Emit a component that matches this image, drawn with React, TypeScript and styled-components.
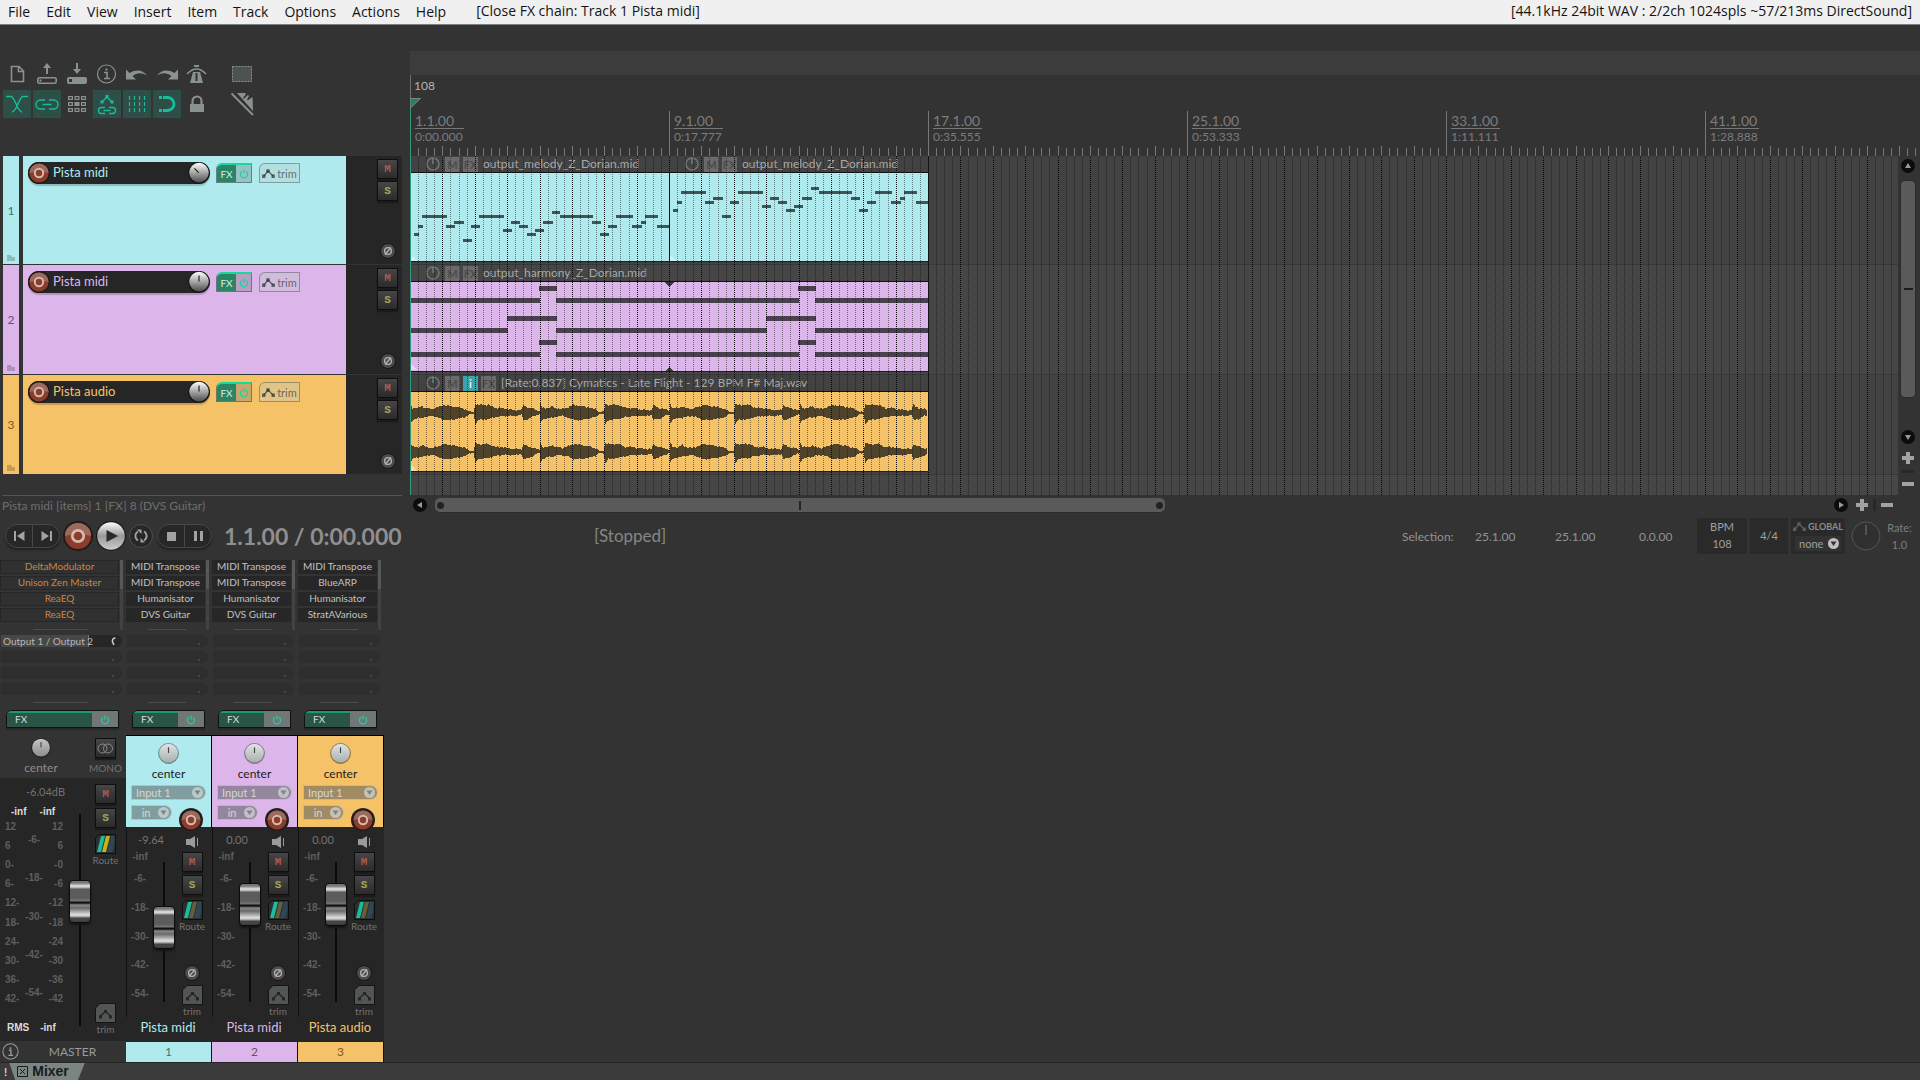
import React from "react";
import styled, { createGlobalStyle, css } from "styled-components";

const UI = `Lato, "Open Sans", "Noto Sans", sans-serif`;
const MENU = `"Open Sans", "Noto Sans", sans-serif`;
const METER = `"Liberation Sans", Arial, sans-serif`;

const BAR = 32.375;
const SECTION = 259;

const GlobalStyle = createGlobalStyle`
  *, *::before, *::after { box-sizing: border-box; }
  body { margin: 0; background: #333; font-family: ${UI}; font-size: 12px; color: #8e8e8e; }
  button, select, input { font: inherit; color: inherit; margin: 0; padding: 0; border: 0; background: none; }
  button { cursor: pointer; }
  svg { display: block; }
`;

/* ---------- data ---------- */

type Track = {
  id: number;
  name: string;
  color: string;
  ink: string;
  height: number;
  knob: number;
  volume: string;
  fader: number;
  fx: string[];
};

const TRACKS: Track[] = [
  { id: 1, name: "Pista midi", color: "#afebee", ink: "#3f7477", height: 108, knob: -45, volume: "-9.64", fader: 55, fx: ["MIDI Transpose", "MIDI Transpose", "Humanisator", "DVS Guitar"] },
  { id: 2, name: "Pista midi", color: "#dcb6ea", ink: "#6d4a7a", height: 109, knob: 0, volume: "0.00", fader: 78, fx: ["MIDI Transpose", "MIDI Transpose", "Humanisator", "DVS Guitar"] },
  { id: 3, name: "Pista audio", color: "#f5c267", ink: "#7d5a1c", height: 99, knob: 0, volume: "0.00", fader: 78, fx: ["MIDI Transpose", "BlueARP", "Humanisator", "StratAVarious"] },
];

const MASTER_FX = ["DeltaModulator", "Unison Zen Master", "ReaEQ", "ReaEQ"];

const MARKS = [
  ["1.1.00", "0:00.000"],
  ["9.1.00", "0:17.777"],
  ["17.1.00", "0:35.555"],
  ["25.1.00", "0:53.333"],
  ["33.1.00", "1:11.111"],
  ["41.1.00", "1:28.888"],
];

/* start, end, row */
const MELODY: [number, number, number][] = [
  [4, 9, 60], [8, 13, 52], [12, 37, 42], [36, 45, 52], [44, 54, 48], [53, 62, 66], [61, 70, 52], [69, 94, 42],
  [93, 102, 56], [101, 110, 48], [109, 118, 52], [117, 126, 60], [125, 134, 56], [133, 143, 48], [142, 150, 38],
  [150, 183, 42], [182, 191, 48], [190, 199, 60], [198, 207, 52], [206, 223, 42], [222, 232, 52], [231, 236, 48],
  [235, 248, 42], [247, 259, 52],
];

const HARMONY: [number, number, number][] = [
  [129, 147, 4], [388, 406, 4],
  [0, 130, 16], [146, 389, 16], [405, 518, 16],
  [97, 147, 34], [356, 406, 34],
  [0, 98, 46], [146, 357, 46], [405, 518, 46],
  [129, 147, 58], [388, 406, 58],
  [0, 130, 70], [146, 389, 70], [405, 518, 70],
];

/* position, level above the axis, level below the axis */
const ENVELOPE: [number, number, number][] = [
  [0, 9, 10], [2, 5, 7], [8, 5, 5], [12, 7, 5], [14, 5, 4], [22, 4, 3], [28, 6, 5], [33, 8, 7], [40, 7, 7], [46, 6, 6],
  [55, 4, 4], [59, 1, 1], [63, 1, 1], [65, 9, 11], [68, 8, 7], [78, 8, 6], [85, 5, 4], [93, 5, 3], [96, 4, 3],
  [105, 3, 3], [111, 3, 2], [113, 8, 7], [118, 5, 6], [124, 4, 3], [129, 2, 1],
];

function level(x: number, side: 1 | 2) {
  for (let i = 1; i < ENVELOPE.length; i++) {
    const a = ENVELOPE[i - 1];
    const b = ENVELOPE[i];
    if (x <= b[0]) return a[side] + ((b[side] - a[side]) * (x - a[0])) / (b[0] - a[0]);
  }
  return 1;
}

function wavePath(axis: number, seed: number) {
  const top: string[] = [];
  const bottom: string[] = [];
  for (let x = 0; x < 517; x++) {
    const local = x % 130;
    const jitter = Math.sin(x * 1.7 + seed) * 0.4 + Math.sin(x * 0.61 + seed * 3) * 0.4;
    const up = Math.max(1, Math.round(level(local, 1) + jitter));
    const down = Math.max(1, Math.round(level(local, 2) - jitter * 0.8));
    top.push(`L${x} ${axis - up}H${x + 1}`);
    bottom.unshift(`L${x + 1} ${axis + down}H${x}`);
  }
  return `M0 ${axis}${top.join("")}${bottom.join("")}Z`;
}

/* ---------- shared parts ---------- */

const Page = styled.div`
  min-height: 100vh;
  display: flex;
  flex-direction: column;
  background: #333;
`;

const MenuBar = styled.header`
  display: flex;
  height: 25px;
  flex: none;
  background: #f0f0f0;
  border-bottom: 1px solid #7c8080;
  color: #141414;
  font: 14px/22px ${MENU};
  padding: 0 8px;
  white-space: nowrap;
`;

const MenuList = styled.nav`
  display: flex;
  gap: 16px;
`;

const MenuItem = styled.button`
  line-height: 22px;
`;

const MenuInfo = styled.span<{ $end?: boolean }>`
  ${(p) => (p.$end ? "margin-left: auto;" : "margin-left: 30px;")}
`;

const Workspace = styled.div`
  display: flex;
`;

const LeftColumn = styled.section`
  flex: none;
  width: 403px;
  margin-right: 7px;
  display: flex;
  flex-direction: column;
  padding-top: 35px;
`;

const Toolbar = styled.div`
  display: flex;
  flex-direction: column;
  gap: 2px;
  padding-left: 3px;
  margin-bottom: 38px;
`;

const ToolRow = styled.div`
  display: flex;
  gap: 2px;
`;

const Tool = styled.button<{ $on?: boolean; $apart?: boolean }>`
  width: 28px;
  height: 28px;
  color: ${(p) => (p.$on ? "#1abc98" : "#8a9290")};
  background: ${(p) => (p.$on ? "#2d4f48" : "transparent")};
  ${(p) => p.$apart && "margin-left: 15px;"}
`;

const SquareButton = styled.button<{ $ink: string }>`
  width: 21px;
  height: 20px;
  border: 1px solid #0f0f0f;
  background: linear-gradient(#464646, #2b2b2b);
  box-shadow: 0 2px 1px #1b1b1b;
  color: ${(p) => p.$ink};
  font: 11px/16px "Liberation Mono", monospace;
  font-weight: 700;
  display: grid;
  place-items: center;
`;

const RoundButton = styled.button<{ $size: number }>`
  width: ${(p) => p.$size}px;
  height: ${(p) => p.$size}px;
  flex: none;
  border-radius: 50%;
`;

const Spacer = styled.div<{ $size?: number }>`
  flex: ${(p) => (p.$size ? `0 0 ${p.$size}px` : "1")};
`;

const RecordArm = ({ size = 22 }: { size?: number }) => (
  <RoundButton $size={size} aria-label="Record arm">
    <svg width={size} height={size} viewBox="0 0 22 22">
      <circle cx="11" cy="11" r="11" fill="#241a18" />
      <circle cx="11" cy="11" r="9.6" fill="#8a3d2c" />
      <path d="M1.4 11a9.6 9.6 0 0 1 19.2 0q-9.6-3-19.2 0z" fill="#9b6a5e" />
      <circle cx="11" cy="11" r="4.2" fill="#8a3d2c" stroke="#d9b8ae" strokeWidth="2" />
    </svg>
  </RoundButton>
);

type KnobProps = { size: number; angle?: number; from?: string; to: string; ink?: string };

const Knob = ({ size, angle = 0, from = "ffffff", to, ink = "#222" }: KnobProps) => (
  <RoundButton $size={size} aria-label="Pan">
    <svg width={size} height={size} viewBox="0 0 22 22">
      <defs>
        <linearGradient id={`k${from}${to}`} x1="0" y1="0" x2="0" y2="1">
          <stop offset="0" stopColor={`#${from}`} />
          <stop offset="1" stopColor={`#${to}`} />
        </linearGradient>
      </defs>
      <circle cx="11" cy="11" r="10.9" fill="#000" opacity=".4" />
      <circle cx="11" cy="10.6" r="9.8" fill={`url(#k${from}${to})`} />
      <path d="M11 4.500v6" stroke={ink} strokeWidth="1.2" transform={`rotate(${angle} 11 11)`} />
    </svg>
  </RoundButton>
);

const Phase = () => (
  <RoundButton $size={16} aria-label="Phase">
    <svg width="16" height="16" viewBox="0 0 16 16">
      <circle cx="8" cy="8" r="7.5" fill="#4b4b4b" stroke="#161616" />
      <circle cx="8" cy="8" r="3.4" fill="none" stroke="#b4b4b4" strokeWidth="1.3" />
      <path d="M5 11.5l6-7" stroke="#b4b4b4" strokeWidth="1.2" />
    </svg>
  </RoundButton>
);

const PowerIcon = () => (
  <svg width="10" height="10" viewBox="0 0 10 10" fill="none" stroke="#1fd0a0" strokeWidth="1.2">
    <path d="M3 2.2a3.6 3.6 0 1 0 4 0M5 .6v4" />
  </svg>
);

const EnvelopeIcon = ({ ink }: { ink: string }) => (
  <svg width="13" height="9" viewBox="0 0 13 9">
    <path d="M2 7l4-5 5 5" fill="none" stroke={ink} strokeWidth="1.3" />
    <path d="M0 5.5h3.4v3.4H0zM4.3.3h3.4v3.4H4.3zM9.5 5.5h3.4v3.4H9.5z" fill={ink} />
  </svg>
);

/* ---------- track panel ---------- */

const TrackList = styled.div`
  display: flex;
  flex-direction: column;
  gap: 1px;
  padding-left: 3px;
  width: 402px;
`;

const TrackRow = styled.article<{ $h: number }>`
  display: flex;
  height: ${(p) => p.$h}px;
`;

const TrackNumber = styled.div<{ $bg: string; $ink: string }>`
  width: 16px;
  margin-right: 4px;
  display: grid;
  grid-template-rows: 1fr auto 1fr;
  justify-items: center;
  background: ${(p) => p.$bg};
  color: ${(p) => p.$ink};
  font-size: 12px;
  svg { align-self: end; margin-bottom: 3px; }
`;

const TrackBody = styled.div<{ $bg: string }>`
  flex: 1;
  display: flex;
  align-items: flex-start;
  padding: 6px 5px;
  background: ${(p) => p.$bg};
`;

const NamePill = styled.div<{ $ink: string }>`
  display: flex;
  align-items: center;
  width: 182px;
  height: 22px;
  margin-right: 6px;
  border-radius: 11px;
  background: #262626;
  box-shadow: 0 2px 1px rgba(0, 0, 0, 0.2);
  color: ${(p) => p.$ink};
  font-size: 13px;
  line-height: 20px;
  span { flex: 1; padding: 0 0 2px 3px; }
`;

const MiniFx = styled.button`
  display: flex;
  align-items: stretch;
  width: 36px;
  height: 20px;
  margin: 1px 7px 0 0;
  border: 1px solid rgba(30, 60, 60, 0.45);
  border-top: 2px solid #17d99a;
  border-top-left-radius: 6px;
  background: rgba(110, 120, 120, 0.35);
  color: #d6efe6;
  font-size: 10px;
  overflow: hidden;
  span { width: 19px; background: #2b8463; line-height: 18px; }
  svg { margin: 4px auto 0; }
`;

const MiniTrim = styled.button`
  display: flex;
  align-items: center;
  justify-content: center;
  gap: 2px;
  width: 41px;
  height: 20px;
  margin-top: 1px;
  border: 1px solid rgba(50, 60, 60, 0.4);
  border-top-left-radius: 6px;
  background: rgba(190, 200, 200, 0.35);
  color: rgba(40, 45, 45, 0.65);
  font-size: 11px;
`;

const TrackSide = styled.div`
  width: 56px;
  display: flex;
  flex-direction: column;
  align-items: flex-end;
  gap: 2px;
  padding: 3px 4px 5px 0;
  background: #262626;
  button:last-child { margin: auto 2px 0 0; }
`;

const HintLine = styled.div`
  margin: 21px 0 0 2px;
  width: 400px;
  border-top: 1px solid #555;
  font-size: 12px;
  line-height: 20px;
  height: 20px;
  color: #6f6f6f;
  white-space: nowrap;
`;

/* ---------- arrange ---------- */

const Arrange = styled.section`
  flex: 1;
  min-width: 0;
  display: flex;
  flex-direction: column;
  padding-top: 26px;
`;

const RegionLane = styled.div`
  height: 24px;
  background: #3c3c3c;
`;

const TempoLane = styled.div`
  height: 23px;
  border-left: 1px solid #707070;
  padding-left: 3px;
  line-height: 22px;
  font-size: 12px;
  color: #b4b4b4;
`;

const Ruler = styled.div`
  display: flex;
  height: 58px;
  padding-top: 13px;
  overflow: hidden;
`;

const RulerCell = styled.div`
  flex: 0 0 ${SECTION}px;
  border-left: 1px solid #777;
  color: #7c7c7c;
`;

const RulerBig = styled.div`
  width: 49px;
  height: 18px;
  margin-left: 4px;
  border-bottom: 1px solid #777;
  font-size: 14px;
  line-height: 20px;
`;

const RulerSmall = styled.div`
  height: 17px;
  margin-left: 4px;
  font-size: 12px;
  line-height: 15px;
`;

const ArrangeRow = styled.div`
  display: flex;
  height: 339px;
  position: relative;
`;

const PlayHead = styled.div`
  position: absolute;
  left: 0;
  top: -58px;
  bottom: 0;
  border-left: 1px solid #2f9a80;
  svg { margin-left: -1px; }
`;

const Lanes = styled.div`
  flex: 1;
  min-width: 0;
  position: relative;
  overflow: hidden;
  background: #464646;
`;

const Lane = styled.div<{ $h: number; $odd?: boolean }>`
  display: flex;
  height: ${(p) => p.$h + 1}px;
  background: ${(p) => (p.$odd ? "#424242" : "#464646")};
  border-bottom: 1px solid #393939;
`;

const GridSvg = styled.svg`
  position: absolute;
  left: 0;
  top: 0;
  width: 100%;
  height: 100%;
  pointer-events: none;
`;

const Item = styled.div<{ $w: number }>`
  flex: 0 0 ${(p) => p.$w}px;
  display: flex;
  flex-direction: column;
  padding-bottom: 2px;
`;

const ItemHead = styled.div`
  display: flex;
  align-items: center;
  height: 17px;
  padding-left: 16px;
  border-bottom: 1px solid #111;
  color: #a9a9a9;
  font-size: 12px;
  white-space: nowrap;
  svg { margin-right: 5px; }
`;

const ItemTag = styled.button<{ $on?: boolean }>`
  width: 15px;
  height: 15px;
  margin-right: 3px;
  background: ${(p) => (p.$on ? "#3aa3ab" : "#6a6a6a")};
  color: ${(p) => (p.$on ? "#e6f6f6" : "#4c4c4c")};
  font-size: 11px;
  line-height: 15px;
  font-weight: 700;
`;

const ItemName = styled.span`
  padding-left: 2px;
  line-height: 18px;
`;

const ItemBody = styled.div<{ $bg: string }>`
  flex: 1;
  overflow: hidden;
  background: ${(p) => p.$bg};
  border-bottom: 1px solid #1d1d1d;
`;

const ItemKnob = () => (
  <svg width="14" height="14" viewBox="0 0 14 14">
    <circle cx="7" cy="7" r="6" fill="none" stroke="#757575" strokeWidth="1.5" />
    <path d="M7 1v6" stroke="#5e8a85" strokeWidth="1.4" />
  </svg>
);

type MediaItemProps = { name: string; width: number; bg: string; info?: boolean; children: React.ReactNode };

const MediaItem = ({ name, width, bg, info, children }: MediaItemProps) => (
  <Item $w={width}>
    <ItemHead>
      <ItemKnob />
      <ItemTag>M</ItemTag>
      {info && <ItemTag $on>i</ItemTag>}
      <ItemTag>FX</ItemTag>
      <ItemName>{name}</ItemName>
    </ItemHead>
    <ItemBody $bg={bg}>{children}</ItemBody>
  </Item>
);

type NotesProps = { notes: [number, number, number][]; thick: number; ink: string; shift?: number; width: number; snap?: boolean };

const Notes = ({ notes, thick, ink, shift = 0, width, snap }: NotesProps) => (
  <svg width={width} height="90" shapeRendering="crispEdges">
    {notes.map(([a, b, y], i) => (
      <rect key={i} x={a} y={y + shift} width={b - a} height={thick} fill={ink} />
    ))}
    <path d="M0 81l7 7H0z" fill="#fff" opacity=".4" />
    {snap && <path d="M254 0h10l-5 5zM254 90h10l-5-5z" fill="#3c3c3c" />}
  </svg>
);

const Wave = () => (
  <svg width="518" height="80" shapeRendering="crispEdges">
    <path d={wavePath(21, 1)} fill="#4f432b" />
    <path d={wavePath(60, 4)} fill="#4f432b" />
    <path d="M0 72l7 7H0z" fill="#fff" opacity=".4" />
  </svg>
);

const GRID_LINES = Array.from({ length: 480 }, (_, k) => k).slice(1);

const Grid = () => (
  <GridSvg shapeRendering="crispEdges">
    {GRID_LINES.map((k) => {
      const x = Math.round((k * BAR) / 4) + 0.5;
      return (
        <line key={k} x1={x} x2={x} y1="0" y2="100%" stroke="#000" strokeOpacity={k % 4 ? 0.45 : 0.9} strokeDasharray="1 1" />
      );
    })}
    <line x1="518.5" x2="518.5" y1="0" y2="315" stroke="#161616" />
    <line x1="259.5" x2="259.5" y1="16" y2="106" stroke="#161616" />
  </GridSvg>
);

const Ticks = () => (
  <svg width="258" height="10" shapeRendering="crispEdges">
    {GRID_LINES.slice(0, 31).map((k) => {
      const x = Math.round((k * BAR) / 4) - 1;
      return <rect key={k} x={x} y={k % 4 ? 2 : 0} width="1" height="10" fill="#777" />;
    })}
  </svg>
);

const VScroll = styled.div`
  flex: none;
  width: 22px;
  display: flex;
  flex-direction: column;
  align-items: center;
  padding: 3px 2px 8px 0;
`;

const VThumb = styled.div`
  width: 14px;
  height: 216px;
  margin: 8px 0 33px;
  border-radius: 4px;
  background: #5a5a5a;
  box-shadow: 0 0 0 1px #2b2b2b;
  display: grid;
  place-items: center;
  &::after { content: ""; width: 9px; height: 2px; background: #1c1c1c; }
`;

const HScroll = styled.div`
  display: flex;
  align-items: center;
  height: 20px;
  padding: 0 27px 0 3px;
`;

const HThumb = styled.div`
  width: 730px;
  height: 14px;
  margin: 0 auto 0 8px;
  padding: 0 2px;
  border-radius: 5px;
  background: #5a5a5a;
  box-shadow: 0 1px 0 #2b2b2b;
  display: flex;
  align-items: center;
  justify-content: space-between;
  i { width: 7px; height: 7px; border-radius: 50%; background: #222; }
  b { width: 2px; height: 9px; background: #222; }
`;

const ZoomDivider = styled.i<{ $flat?: boolean }>`
  flex: none;
  background: #282828;
  ${(p) => (p.$flat ? css`width: 12px; height: 3px; margin: 6px 0 9px;` : css`width: 3px; height: 12px; margin: 0 5px;`)}
`;

const ScrollArrow = ({ turn, label }: { turn: number; label: string }) => (
  <RoundButton $size={14} aria-label={label}>
    <svg width="14" height="14" viewBox="0 0 14 14">
      <circle cx="7" cy="7" r="7" fill="#0c0c0c" />
      <path d="M7 4l3 5H4z" fill="#9a9a9a" transform={`rotate(${turn} 7 7)`} />
    </svg>
  </RoundButton>
);

const ZoomButton = ({ plus }: { plus?: boolean }) => (
  <button aria-label={plus ? "Zoom in" : "Zoom out"}>
    <svg width="12" height={plus ? 12 : 4} viewBox={plus ? "0 0 12 12" : "0 4 12 4"}>
      <path d={plus ? "M0 4h4V0h4v4h4v4H8v4H4V8H0z" : "M0 4h12v4H0z"} fill="#a2a2a2" />
    </svg>
  </button>
);

/* ---------- transport ---------- */

const Transport = styled.section`
  display: flex;
  align-items: center;
  height: 44px;
  padding: 0 6px 2px 5px;
`;

const TransportPill = styled.div`
  display: flex;
  height: 24px;
  border: 1px solid #484848;
  border-radius: 12px;
  background: #272727;
  box-shadow: 0 2px 2px #222;
  button { width: 26px; display: grid; place-items: center; color: #a2a2a2; }
  button + button { width: 27px; border-left: 1px solid #484848; }
`;

const TransportMid = styled.div`
  display: flex;
  align-items: center;
  gap: 3px;
  margin: 0 4px 0 3px;
`;

const TimeReadout = styled.output`
  margin-left: 12px;
  width: 370px;
  color: #8f8f8f;
  font-size: 23px;
  line-height: 30px;
  font-weight: 700;
  white-space: nowrap;
`;

const PlayState = styled.span`
  font-size: 17px;
  line-height: 20px;
  color: #868686;
`;

const Selection = styled.div`
  display: flex;
  margin-left: auto;
  color: #929292;
  span { width: 80px; }
  span:first-child { width: 73px; }
  span:last-child { width: 62px; padding-left: 4px; }
`;

const TransportBox = styled.div<{ $w: number }>`
  display: flex;
  flex-direction: column;
  align-items: center;
  justify-content: space-around;
  width: ${(p) => p.$w}px;
  height: 36px;
  margin-right: 3px;
  padding-bottom: 2px;
  background: #2a2a2a;
  color: #a0a0a0;
  font-size: 11px;
  line-height: 15px;
`;

const GlobalRow = styled.div`
  display: flex;
  align-items: center;
  gap: 2px;
  font-size: 9px;
  font-weight: 700;
  color: #8c8c8c;
`;

const SelectWrap = styled.label<{ $w: number; $tone: string }>`
  display: grid;
  align-items: center;
  width: ${(p) => p.$w}px;
  height: 15px;
  background: ${(p) => p.$tone};
  select, svg { grid-area: 1 / 1; }
  select { appearance: none; width: 100%; padding-left: 4px; outline: 0; }
  svg { justify-self: end; margin-right: 2px; pointer-events: none; }
`;

const DownDot = ({ ink, hole }: { ink: string; hole: string }) => (
  <svg width="11" height="11" viewBox="0 0 11 11">
    <circle cx="5.5" cy="5.5" r="5.5" fill={ink} />
    <path d="M2.5 3.500h6l-3 4.5z" fill={hole} />
  </svg>
);

const RateBox = styled.div`
  display: flex;
  flex-direction: column;
  align-items: center;
  width: 29px;
  margin-left: 4px;
  font-size: 11px;
  line-height: 17px;
  color: #7e7e7e;
`;

/* ---------- mixer ---------- */

const Mixer = styled.section`
  display: flex;
`;

const Strip = styled.article<{ $w: number }>`
  width: ${(p) => p.$w}px;
  display: flex;
  flex-direction: column;
`;

const InsertArea = styled.div`
  display: flex;
  height: 71px;
  padding: 1px 3px 0 0;
`;

const InsertList = styled.ul`
  flex: 1;
  margin: 0;
  padding: 0 1px 0 0;
  list-style: none;
  display: flex;
  flex-direction: column;
  gap: 2px;
`;

const Insert = styled.li<{ $master?: boolean }>`
  height: 14px;
  border: 1px solid #262626;
  background: ${(p) => (p.$master ? "#303030" : "#272727")};
  color: ${(p) => (p.$master ? "#c98744" : "#c2c2c2")};
  font-size: 10px;
  line-height: 10px;
  text-align: center;
  white-space: nowrap;
`;

const InsertScroll = styled.div`
  width: 3px;
  background: linear-gradient(#585858 0 29px, #424242 29px);
`;

const Rule = styled.div`
  height: 1px;
  margin: -1px 30% 0 26%;
  background: #4c4c4c;
`;

const SendList = styled.div`
  display: flex;
  flex-direction: column;
  gap: 4px;
  padding: 5px 4px 0 1px;
  margin-bottom: 8px;
`;

const Send = styled.div<{ $live?: boolean }>`
  display: flex;
  justify-content: space-between;
  align-items: center;
  height: 12px;
  padding: 0 6px 0 2px;
  border-radius: 0 6px 6px 0;
  background: ${(p) => (p.$live ? "linear-gradient(90deg, #474747 0 87px, #777 87px 88px, #262626 88px)" : "#2e2e2e")};
  color: #b8b8b8;
  font-size: 10px;
  line-height: 12px;
  white-space: nowrap;
  i { width: 2px; height: 2px; margin: 6px 2px 0 auto; background: #484848; }
`;

const FxBar = styled.button`
  display: flex;
  height: 18px;
  margin: 7px 7px 7px 6px;
  border: 1px solid #111;
  border-top-left-radius: 6px;
  background: #6f7877;
  color: #d3dcd9;
  font-size: 10px;
  line-height: 16px;
  text-align: left;
  overflow: hidden;
  box-shadow: 0 2px 1px #262626;
  span { flex: 1; padding-left: 8px; background: #2a5546; box-shadow: inset 0 2px 0 #1a9a70; }
  svg { margin: 4px 8px 0; }
`;

const PanArea = styled.div<{ $bg: string }>`
  height: 92px;
  border-top: 1px solid #000;
  border-right: 1px solid #000;
  background: ${(p) => p.$bg};
  color: #1b1b1b;
  display: grid;
  grid-template-rows: 42px 20px 1fr;
  padding: 7px 5px 0;
  justify-items: start;
`;

const PanKnob = styled.div`
  justify-self: center;
  display: flex;
  flex-direction: column;
  align-items: center;
  gap: 3px;
  font-size: 12px;
  line-height: 14px;
`;

const MixSelect = styled(SelectWrap)`
  border: 1px solid rgba(255, 255, 255, 0.4);
  border-radius: 0 8px 8px 0;
  color: #d4d8d8;
  font-size: 11px;
  line-height: 13px;
`;

const InputRow = styled.div`
  display: flex;
  gap: 7px;
`;

const ArmSlot = styled.div`
  margin: 3px 0 -16px;
  width: 24px;
  height: 24px;
  padding: 1px;
  border-radius: 50%;
  background: #262626;
  z-index: 1;
`;

const ScaleColumn = styled.div<{ $align: string }>`
  display: flex;
  flex-direction: column;
  justify-content: space-between;
  text-align: ${(p) => p.$align};
  color: #5f5f5f;
  font: 10px/12px ${METER};
  font-weight: 700;
`;

const ScaleRest = styled.div`
  display: flex;
  flex-direction: column;
  justify-content: space-between;
  height: 127px;
  margin: 10px 0 auto;
`;

const MidScale = styled(ScaleColumn)`
  padding: 13px 0 6px;
`;

const ButtonColumn = styled.div`
  display: flex;
  flex-direction: column;
  align-items: center;
  font-size: 10px;
  line-height: 12px;
  color: #727272;
`;

const FaderSlot = styled.div<{ $top: number; $left?: number }>`
  padding-top: ${(p) => p.$top}px;
  padding-left: ${(p) => p.$left ?? 0}px;
`;

const Fader = styled.input<{ $h: number }>`
  appearance: none;
  writing-mode: vertical-lr;
  direction: rtl;
  width: 22px;
  height: ${(p) => p.$h}px;
  background: linear-gradient(90deg, transparent 0 10px, #0a0a0a 10px 12px, transparent 12px);
  &::-webkit-slider-thumb {
    appearance: none;
    width: 22px;
    height: 43px;
    border: 1px solid #0c0c0c;
    border-radius: 4px;
    box-shadow: 0 2px 2px #151515;
    background: linear-gradient(#777 0 2px, #e4e4e4 5px, #a5a5a5 7px, #5c5c5c 8px 17px, #777 20px, #111 21px 22px, #8a8a8a 24px, #6a6a6a 27px, #e2e2e2 34px, #9a9a9a 36px, #444 37px 40px, #333);
  }
`;

const ChannelBody = styled.div`
  display: grid;
  grid-template-columns: 50px 30px;
  height: 190px;
  background: #262626;
  border-left: 1px solid #111;
`;

const ChannelMeter = styled.div`
  display: grid;
  grid-template-columns: 26px 22px;
  grid-template-rows: 19px 1fr;
  padding-top: 5px;
`;

const ChannelVolume = styled.div`
  grid-column: 1 / -1;
  color: #747474;
  font-size: 11px;
  line-height: 16px;
  text-align: center;
`;

const StripName = styled.div<{ $ink: string }>`
  height: 25px;
  background: #262626;
  color: ${(p) => p.$ink};
  font-size: 13px;
  line-height: 20px;
  text-align: center;
  padding-right: 2px;
`;

const StripNumber = styled.div<{ $bg: string; $ink: string }>`
  height: 20px;
  border-right: 1px solid #111;
  background: ${(p) => p.$bg};
  color: ${(p) => p.$ink};
  font-size: 12px;
  line-height: 20px;
  text-align: center;
`;

const MasterPan = styled.div`
  display: grid;
  grid-template-columns: 82px 47px;
  height: 43px;
  padding-top: 3px;
  font-size: 12px;
  color: #8d8d8d;
`;

const MasterBody = styled.div`
  display: grid;
  grid-template-columns: 64px 26px 31px;
  height: 263px;
  background: #262626;
`;

const MasterScales = styled.div`
  display: flex;
  flex-direction: column;
`;

const MasterVolume = styled.div`
  padding-left: 26px;
  font-size: 11px;
  line-height: 14px;
  color: #727272;
`;

const MasterLevels = styled.div`
  display: grid;
  grid-template-columns: 18px 22px 18px;
  height: 184px;
  padding-left: 5px;
`;

const MasterPeaks = styled.div<{ $rms?: boolean }>`
  display: flex;
  gap: ${(p) => (p.$rms ? 11 : 13)}px;
  padding-left: ${(p) => (p.$rms ? 7 : 11)}px;
  color: #dcdcdc;
  font: 10px/14px ${METER};
  font-weight: 700;
  height: 14px;
`;

const MasterFoot = styled.div`
  display: flex;
  align-items: center;
  height: 21px;
  padding-left: 2px;
  color: #9a9a9a;
  span { flex: 1; text-align: center; }
`;

const Dock = styled.footer`
  display: flex;
  align-items: center;
  height: 18px;
  border-top: 1px solid #262626;
  background: #3b3b3b;
  padding-left: 4px;
  color: #f2f2f2;
`;

const DockTab = styled.button`
  display: flex;
  align-items: center;
  gap: 4px;
  height: 17px;
  margin-left: 2px;
  padding: 0 16px 0 8px;
  background: #7b8583;
  clip-path: polygon(0 0, 100% 0, 91% 100%, 8% 100%);
  color: #181c1c;
  font: 14px/17px ${METER};
  font-weight: 700;
`;

const RouteIcon = ({ dim }: { dim?: boolean }) => (
  <button aria-label="Routing">
    <svg width="21" height="20" viewBox="0 0 21 20">
      <path d="M4 .5h16.5v19H.5V4z" fill="#2b2f31" stroke="#0e0e0e" />
      <path d="M6 2h4l-4 16H2z" fill="#1abc9c" />
      <path d="M11 2h4l-4 16H7z" fill={dim ? "#665f38" : "#c5b417"} />
      <path d="M16 2h3.5v8l-2 8H12z" fill="#2f4656" />
    </svg>
  </button>
);

const TrimIcon = () => (
  <button aria-label="Envelope">
    <svg width="21" height="20" viewBox="0 0 21 20">
      <path d="M5 .5h15.5v19H.5V5z" fill="#515555" stroke="#141414" />
      <path d="M5 13.5l5.5-5 5.5 5" fill="none" stroke="#242424" strokeWidth="1.3" />
      <path d="M4 12.5h3v3H4zM9 7h3v3H9zM14 12.5h3v3h-3z" fill="#242424" />
    </svg>
  </button>
);

const Speaker = () => (
  <svg width="13" height="12" viewBox="0 0 13 12">
    <path d="M0 3h4l5-3v12L4 9H0z" fill="#9a9a9a" />
    <path d="M11.5 2v8" stroke="#9a9a9a" />
  </svg>
);

const InfoIcon = ({ size }: { size: number }) => (
  <svg width={size} height={size} viewBox="0 0 20 20" fill="none" stroke="currentColor">
    <circle cx="10" cy="10" r="9" strokeWidth="1.2" />
    <path d="M8 8.5h2.5V14M7.5 14.5h5.5" strokeWidth="1.6" />
    <path d="M9 5h2v2H9z" fill="currentColor" stroke="none" />
  </svg>
);

const Inserts = ({ names, master }: { names: string[]; master?: boolean }) => (
  <>
    <InsertArea>
      <InsertList>
        {names.map((n, i) => (
          <Insert key={i} $master={master}>{n}</Insert>
        ))}
      </InsertList>
      <InsertScroll />
    </InsertArea>
    <Rule />
    <SendList>
      <Send $live={master}>
        {master ? (
          <>
            Output 1 / Output 2
            <svg width="5" height="9" viewBox="0 0 5 9"><path d="M4.5 1Q1 1 1.5 5l1.5 3" fill="none" stroke="#c8c8c8" strokeWidth="1.6" /></svg>
          </>
        ) : <i />}
      </Send>
      <Send><i /></Send>
      <Send><i /></Send>
      <Send><i /></Send>
    </SendList>
    <Rule />
    <FxBar><span>FX</span><PowerIcon /></FxBar>
  </>
);

const Channel = ({ t }: { t: Track }) => (
  <Strip $w={86}>
    <Inserts names={t.fx} />
    <PanArea $bg={t.color}>
      <PanKnob>
        <Knob size={21} from="dfe4e4" to="a9b0b0" ink="#444" />
        center
      </PanKnob>
      <MixSelect $w={75} $tone="rgba(90, 95, 95, 0.55)">
        <select aria-label={`Track ${t.id} input`}><option>Input 1</option></select>
        <DownDot ink="rgba(225,230,230,.6)" hole="#7b8585" />
      </MixSelect>
      <InputRow>
        <MixSelect $w={41} $tone="rgba(90, 95, 95, 0.55)">
          <select aria-label={`Track ${t.id} mode`}><option>&nbsp; in</option></select>
          <DownDot ink="rgba(225,230,230,.6)" hole="#7b8585" />
        </MixSelect>
        <ArmSlot><RecordArm /></ArmSlot>
      </InputRow>
    </PanArea>
    <ChannelBody>
      <ChannelMeter>
        <ChannelVolume>{t.volume}</ChannelVolume>
        <ScaleColumn $align="center">
          <span>-inf</span>
          <ScaleRest>
            {["-6-", "-18-", "-30-", "-42-", "-54-"].map((s) => <span key={s}>{s}</span>)}
          </ScaleRest>
        </ScaleColumn>
        <FaderSlot $top={11}>
          <Fader type="range" $h={140} defaultValue={t.fader} aria-label={`Track ${t.id} volume`} />
        </FaderSlot>
      </ChannelMeter>
      <ButtonColumn>
        <Spacer $size={9} />
        <Speaker />
        <Spacer $size={4} />
        <SquareButton $ink="#a85a54" aria-label="Mute">M</SquareButton>
        <Spacer $size={3} />
        <SquareButton $ink="#a5a556" aria-label="Solo">S</SquareButton>
        <Spacer $size={5} />
        <RouteIcon dim />
        <span>Route</span>
        <Spacer />
        <Phase />
        <Spacer $size={4} />
        <TrimIcon />
        <span>trim</span>
      </ButtonColumn>
    </ChannelBody>
    <StripName $ink={t.color}>{t.name}</StripName>
    <StripNumber $bg={t.color} $ink={t.ink}>{t.id}</StripNumber>
  </Strip>
);

const Master = () => (
  <Strip $w={126}>
    <Inserts names={MASTER_FX} master />
    <MasterPan>
      <PanKnob>
        <Knob size={20} from="c4c4c4" to="8b8f8f" ink="#444" />
        center
      </PanKnob>
      <ButtonColumn>
        <SquareButton $ink="#8d8d8d" aria-label="Mono">
          <svg width="17" height="11" viewBox="0 0 17 11" fill="none" stroke="#8d8d8d">
            <circle cx="5.5" cy="5.5" r="4.5" /><circle cx="11" cy="5.5" r="4.5" />
          </svg>
        </SquareButton>
        <Spacer $size={4} />
        MONO
      </ButtonColumn>
    </MasterPan>
    <MasterBody>
      <MasterScales>
        <Spacer $size={7} />
        <MasterVolume>-6.04dB</MasterVolume>
        <Spacer $size={6} />
        <MasterPeaks><span>-inf</span><span>-inf</span></MasterPeaks>
        <Spacer $size={2} />
        <MasterLevels>
          <ScaleColumn $align="left">
            {["12", "6", "0-", "6-", "12-", "18-", "24-", "30-", "36-", "42-"].map((s) => <span key={s}>{s}</span>)}
          </ScaleColumn>
          <MidScale $align="center">
            {["-6-", "-18-", "-30-", "-42-", "-54-"].map((s) => <span key={s}>{s}</span>)}
          </MidScale>
          <ScaleColumn $align="right">
            {["12", "6", "-0", "-6", "-12", "-18", "-24", "-30", "-36", "-42"].map((s) => <span key={s}>{s}</span>)}
          </ScaleColumn>
        </MasterLevels>
        <Spacer $size={16} />
        <MasterPeaks $rms><span>RMS</span><span>-inf</span></MasterPeaks>
      </MasterScales>
      <FaderSlot $top={36} $left={5}>
        <Fader type="range" $h={212} defaultValue={61} aria-label="Master volume" />
      </FaderSlot>
      <ButtonColumn>
        <Spacer $size={6} />
        <SquareButton $ink="#a85a54" aria-label="Mute">M</SquareButton>
        <Spacer $size={4} />
        <SquareButton $ink="#a5a556" aria-label="Solo">S</SquareButton>
        <Spacer $size={6} />
        <RouteIcon />
        <span>Route</span>
        <Spacer />
        <TrimIcon />
        <span>trim</span>
        <Spacer $size={6} />
      </ButtonColumn>
    </MasterBody>
    <MasterFoot><InfoIcon size={17} /><span>MASTER</span></MasterFoot>
  </Strip>
);

/* ---------- toolbar drawings ---------- */

const stroke = { fill: "none", stroke: "currentColor", strokeWidth: 1.6 };
const Drawing = ({ children }: { children: React.ReactNode }) => (
  <svg width="28" height="28" viewBox="0 0 28 28" fill="currentColor">{children}</svg>
);

const TOP_TOOLS: [string, React.ReactNode][] = [
  ["New project", <path key="a" d="M8.5 6.5H16l4.5 4.5v10.5h-12zM15.5 6.5v5h5" {...stroke} />],
  ["Open project", <g key="a"><path d="M14 3l4 5h-3v6h-2V8h-3z" /><rect x="4.8" y="17.8" width="18.4" height="5.4" rx="1.5" {...stroke} /><path d="M6.5 19.5h2v2h-2z" /></g>],
  ["Save project", <g key="a"><path d="M14 14l4-5h-3V3h-2v6h-3z" /><rect x="4" y="17" width="20" height="7" rx="2" /><path d="M6 19h3v3H6z" fill="#333" /></g>],
  ["Project settings", <g key="a"><circle cx="13.5" cy="14" r="9" {...stroke} strokeWidth={1.2} /><path d="M11 12.5h3V18M11 18.500h6" {...stroke} /><path d="M12.500 8.500h2v2h-2z" /></g>],
  ["Undo", <path key="a" d="M3 9.5v10h10l-3.5-3.5q6-5 14.5-.5Q17 7 6.5 13z" />],
  ["Redo", <path key="a" d="M25 9.5v10H15l3.5-3.5q-6-5-14.5-.5Q11 7 21.5 13z" />],
  ["Metronome", <g key="a"><path d="M11 5h5v2h-5z" /><path d="M4 14q9.500-10 19 0" {...stroke} /><path d="M10 12h7l3 11H7zM12.500 13v8h2v-8z" fillRule="evenodd" /></g>],
];

const LOW_TOOLS: [string, boolean, React.ReactNode][] = [
  ["Auto-crossfade", true, <path key="a" d="M3 6.5h5c4 0 6 15.5 11 15.5M25 6.500h-5C16 6.500 14 22 9 22" {...stroke} strokeWidth={1.4} />],
  ["Item grouping", true, <path key="a" d="M12 10H7.500a4 4 0 0 0 0 9H12M16 10h4.500a4 4 0 0 1 0 9H16M9.500 14.500h9" {...stroke} strokeWidth={1.4} />],
  ["Ripple editing", false, <g key="a" {...stroke} strokeWidth={1.2}>{[5.6, 12.1, 18.6].map((x) => [6.6, 12.6, 18.6].map((y) => <rect key={`${x}${y}`} x={x} y={y} width="3.8" height="2.8" fill={x === 12.1 && y === 12.6 ? "currentColor" : "none"} />))}</g>],
  ["Move envelopes", true, <g key="a"><path d="M9 12l5-5 5 5" {...stroke} strokeWidth={1.3} /><path d="M7.500 10.500h3v3h-3zM12.500 5h3v3h-3zM17.500 10.500h3v3h-3z" /><path d="M12 17.500H8.500a3 3 0 0 0 0 6H12M16 17.500h3.500a3 3 0 0 1 0 6H16M10.500 20.500h7" {...stroke} strokeWidth={1.4} /></g>],
  ["Grid lines", true, <path key="a" d="M6.500 6v18M11.500 6v18M16.500 6v18M21.500 6v18" {...stroke} strokeWidth={1.2} strokeDasharray="4 2" />],
  ["Snapping", true, <g key="a"><path d="M10 7.500h4.500a6.500 6.500 0 0 1 0 13H10" {...stroke} strokeWidth={2.8} /><path d="M6 6h3v3H6zM6 19h3v3H6z" /></g>],
  ["Locking", false, <g key="a"><path d="M7 14h14v8H7z" /><path d="M9.500 14v-3a4.500 4.500 0 0 1 9 0v3" {...stroke} strokeWidth={2.2} /></g>],
];

export default function App() {
  return (
    <Page>
      <GlobalStyle />
      <MenuBar>
        <MenuList>
          {["File", "Edit", "View", "Insert", "Item", "Track", "Options", "Actions", "Help"].map((m) => (
            <MenuItem key={m}>{m}</MenuItem>
          ))}
        </MenuList>
        <MenuInfo>[Close FX chain: Track 1 Pista midi]</MenuInfo>
        <MenuInfo $end>[44.1kHz 24bit WAV : 2/2ch 1024spls ~57/213ms DirectSound]</MenuInfo>
      </MenuBar>

      <Workspace>
        <LeftColumn>
          <Toolbar>
            <ToolRow>
              {TOP_TOOLS.map(([label, art]) => (
                <Tool key={label} aria-label={label}><Drawing>{art}</Drawing></Tool>
              ))}
              <Tool $apart aria-label="Marquee">
                <Drawing><rect x="4.5" y="6.5" width="19" height="15" fill="#4d5352" stroke="currentColor" strokeDasharray="2 1" /></Drawing>
              </Tool>
            </ToolRow>
            <ToolRow>
              {LOW_TOOLS.map(([label, on, art]) => (
                <Tool key={label} $on={on} aria-label={label}><Drawing>{art}</Drawing></Tool>
              ))}
              <Tool $apart aria-label="Theme">
                <Drawing>
                  <path d="M3.5 3.5L25 25" {...stroke} strokeWidth={1.8} />
                  <path d="M9 3h8l1 1-3 4 1 .8L20 5l1 1-2 3.5 1 .8L24.5 7 25 21z" />
                </Drawing>
              </Tool>
            </ToolRow>
          </Toolbar>

          <TrackList>
            {TRACKS.map((t) => (
              <TrackRow key={t.id} $h={t.height}>
                <TrackNumber $bg={t.color} $ink={t.ink}>
                  <span />
                  {t.id}
                  <svg width="8" height="6" viewBox="0 0 8 6"><path d="M0 0h4l1 2h3v4H0z" fill="#000" opacity=".2" /></svg>
                </TrackNumber>
                <TrackBody $bg={t.color}>
                  <NamePill $ink={t.color}>
                    <RecordArm />
                    <span>{t.name}</span>
                    <Knob size={22} angle={t.knob} to="4d4d4d" />
                  </NamePill>
                  <MiniFx><span>FX</span><PowerIcon /></MiniFx>
                  <MiniTrim><EnvelopeIcon ink="rgba(30,40,40,.65)" />trim</MiniTrim>
                </TrackBody>
                <TrackSide>
                  <SquareButton $ink="#a85a54" aria-label="Mute">M</SquareButton>
                  <SquareButton $ink="#a5a556" aria-label="Solo">S</SquareButton>
                  <Phase />
                </TrackSide>
              </TrackRow>
            ))}
          </TrackList>
          <HintLine>Pista midi [items] 1 [FX] 8 (DVS Guitar)</HintLine>
        </LeftColumn>

        <Arrange>
          <RegionLane />
          <TempoLane>108</TempoLane>
          <Ruler>
            {MARKS.map(([bar, time]) => (
              <RulerCell key={bar}>
                <RulerBig>{bar}</RulerBig>
                <RulerSmall>{time}</RulerSmall>
                <Ticks />
              </RulerCell>
            ))}
          </Ruler>
          <ArrangeRow>
            <Lanes>
              <Lane $h={108} $odd>
                <MediaItem name="output_melody_Z_Dorian.mid" width={SECTION} bg={TRACKS[0].color}>
                  <Notes notes={MELODY} thick={3} ink="#3e5455" width={SECTION} />
                </MediaItem>
                <MediaItem name="output_melody_Z_Dorian.mid" width={SECTION} bg={TRACKS[0].color}>
                  <Notes notes={MELODY} thick={3} ink="#3e5455" shift={-24} width={SECTION} />
                </MediaItem>
              </Lane>
              <Lane $h={109}>
                <MediaItem name="output_harmony_Z_Dorian.mid" width={SECTION * 2} bg={TRACKS[1].color}>
                  <Notes notes={HARMONY} thick={5} ink="#4b404f" width={SECTION * 2} snap />
                </MediaItem>
              </Lane>
              <Lane $h={99} $odd>
                <MediaItem name="[Rate:0.837] Cymatics - Late Flight - 129 BPM F# Maj.wav" width={SECTION * 2} bg={TRACKS[2].color} info>
                  <Wave />
                </MediaItem>
              </Lane>
              <Grid />
            </Lanes>
            <VScroll>
              <ScrollArrow turn={0} label="Scroll up" />
              <VThumb />
              <ScrollArrow turn={180} label="Scroll down" />
              <Spacer $size={8} />
              <ZoomButton plus />
              <ZoomDivider $flat />
              <ZoomButton />
            </VScroll>
            <PlayHead>
              <svg width="11" height="11" viewBox="0 0 11 11"><path d="M0 .5h10.5L0 10.5z" fill="#2e7a68" stroke="#8a9290" strokeWidth=".8" /></svg>
            </PlayHead>
          </ArrangeRow>
          <HScroll>
            <ScrollArrow turn={-90} label="Scroll left" />
            <HThumb><i /><b /><i /></HThumb>
            <ScrollArrow turn={90} label="Scroll right" />
            <Spacer $size={8} />
            <ZoomButton plus />
            <ZoomDivider />
            <ZoomButton />
          </HScroll>
        </Arrange>
      </Workspace>

      <Transport>
        <TransportPill>
          <button aria-label="Go to start"><svg width="11" height="10" viewBox="0 0 11 10"><path d="M0 0h2v10H0zM10.5 0v10L3 5z" fill="currentColor" /></svg></button>
          <button aria-label="Go to end"><svg width="11" height="10" viewBox="0 0 11 10"><path d="M9 0h2v10H9zM.5 0v10L8 5z" fill="currentColor" /></svg></button>
        </TransportPill>
        <TransportMid>
          <RecordArm size={30} />
          <RoundButton $size={30} aria-label="Play">
            <svg width="30" height="30" viewBox="0 0 30 30">
              <defs><linearGradient id="play" x1="0" y1="0" x2="0" y2="1"><stop offset="0" stopColor="#fff" /><stop offset=".5" stopColor="#999" /><stop offset="1" stopColor="#ccc" /></linearGradient></defs>
              <circle cx="15" cy="15" r="15" fill="#1c1c1c" />
              <circle cx="15" cy="15" r="13.8" fill="url(#play)" />
              <path d="M10.5 9v12L22 15z" fill="#2b2b2b" />
            </svg>
          </RoundButton>
          <RoundButton $size={24} aria-label="Repeat">
            <svg width="24" height="24" viewBox="0 0 24 24">
              <circle cx="12" cy="12" r="11.5" fill="#272727" stroke="#505050" />
              <path d="M9 16.5a5.2 5.2 0 0 1 0-9M15 7.5a5.2 5.2 0 0 1 0 9" fill="none" stroke="#a2a2a2" strokeWidth="1.8" />
              <path d="M8 5.5h4.5V10zM16 18.5h-4.5V14z" fill="#a2a2a2" />
            </svg>
          </RoundButton>
        </TransportMid>
        <TransportPill>
          <button aria-label="Stop"><svg width="9" height="9"><path d="M0 0h9v9H0z" fill="currentColor" /></svg></button>
          <button aria-label="Pause"><svg width="9" height="10"><path d="M0 0h3v10H0zM6 0h3v10H6z" fill="currentColor" /></svg></button>
        </TransportPill>
        <TimeReadout>1.1.00 / 0:00.000</TimeReadout>
        <PlayState>[Stopped]</PlayState>
        <Selection>
          <span>Selection:</span>
          <span>25.1.00</span>
          <span>25.1.00</span>
          <span>0.0.00</span>
        </Selection>
        <TransportBox $w={50}><span>BPM</span><span>108</span></TransportBox>
        <TransportBox $w={38}>4/4</TransportBox>
        <TransportBox $w={54}>
          <GlobalRow><EnvelopeIcon ink="#5c5c5c" />GLOBAL</GlobalRow>
          <SelectWrap $w={46} $tone="#323232">
            <select aria-label="Global automation"><option>none</option></select>
            <DownDot ink="#c0c0c0" hole="#323232" />
          </SelectWrap>
        </TransportBox>
        <Spacer $size={3} />
        <RoundButton $size={30} aria-label="Playback rate">
          <svg width="30" height="30" viewBox="0 0 30 30">
            <circle cx="15" cy="15" r="14" fill="#303030" stroke="#555" />
            <path d="M15 4v10" stroke="#777" />
          </svg>
        </RoundButton>
        <RateBox><span>Rate:</span><span>1.0</span></RateBox>
      </Transport>

      <Mixer>
        <Master />
        {TRACKS.map((t) => <Channel key={t.id} t={t} />)}
      </Mixer>

      <Dock>
        !
        <DockTab>
          <svg width="11" height="11" viewBox="0 0 11 11" fill="none" stroke="#181c1c"><path d="M.5.5h10v10H.5zM3 3l5 5M8 3L3 8" /></svg>
          Mixer
        </DockTab>
      </Dock>
    </Page>
  );
}
